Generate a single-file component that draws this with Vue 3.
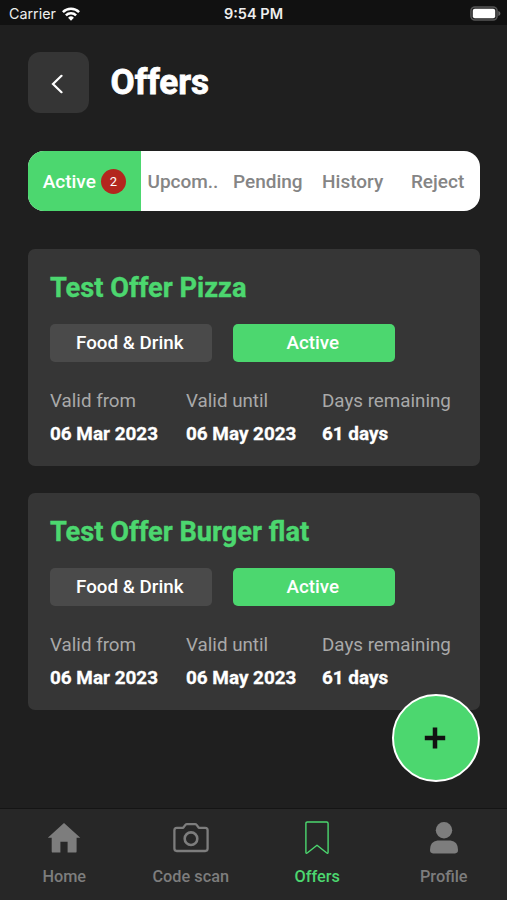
<script setup>
const tabs = [
  { label: 'Active', count: 2, active: true },
  { label: 'Upcom..' },
  { label: 'Pending' },
  { label: 'History' },
  { label: 'Reject' },
]
const offers = ['Test Offer Pizza', 'Test Offer Burger flat'].map((title) => ({
  title,
  category: 'Food & Drink',
  status: 'Active',
  details: [
    { label: 'Valid from', value: '06 Mar 2023' },
    { label: 'Valid until', value: '06 May 2023' },
    { label: 'Days remaining', value: '61 days' },
  ],
}))
</script>

<template>
  <div class="screen">
    <div class="status-bar">
      <div class="carrier">
        <span>Carrier</span>
        <svg width="18" height="14" viewBox="0 0 18 14" fill="none" stroke="#fff" stroke-width="2.5">
          <path d="M0.9 5.1a11.5 11.5 0 0 1 16.2 0" />
          <path d="M3.9 8.3a7.2 7.2 0 0 1 10.2 0" />
          <path d="M9 13.8 6.1 10.8a4.1 4.1 0 0 1 5.8 0z" fill="#fff" stroke="none" />
        </svg>
      </div>
      <span class="clock">9:54 PM</span>
      <svg class="battery" width="31" height="15" viewBox="0 0 31 15">
        <rect x="0.9" y="0.9" width="26.2" height="13.2" rx="4" fill="#222" stroke="#555" stroke-width="1.5" />
        <rect x="2.8" y="2.8" width="22.4" height="9.4" rx="2" fill="#fff" />
        <path d="M28.3 5c2.8.8 2.8 4.2 0 5z" fill="#666" />
      </svg>
    </div>

    <header class="header">
      <button class="back" aria-label="Back">
        <svg width="12" height="20" viewBox="0 0 12 20" fill="none" stroke="#fff" stroke-width="2.2" stroke-linecap="round">
          <path d="M10.5 1.8 2 10l8.5 8.2" />
        </svg>
      </button>
      <h1>Offers</h1>
    </header>

    <nav class="tabs">
      <div v-for="tab in tabs" :key="tab.label" class="tab" :class="{ active: tab.active }">
        <span>{{ tab.label }}</span>
        <span v-if="tab.count" class="count">{{ tab.count }}</span>
      </div>
    </nav>

    <main class="offers">
      <article v-for="offer in offers" :key="offer.title" class="card">
        <h2>{{ offer.title }}</h2>
        <div class="chips">
          <span class="chip">{{ offer.category }}</span>
          <span class="chip on">{{ offer.status }}</span>
        </div>
        <dl class="details">
          <div v-for="d in offer.details" :key="d.label">
            <dt>{{ d.label }}</dt>
            <dd>{{ d.value }}</dd>
          </div>
        </dl>
      </article>
    </main>

    <button class="fab" aria-label="Add offer">
      <svg width="22" height="22" viewBox="0 0 22 22" fill="none" stroke="#111" stroke-width="4.5">
        <path d="M11 .5v21M.8 11h20.4" />
      </svg>
    </button>

    <footer class="bottom-nav">
      <div class="nav-item">
        <svg width="36" height="36" viewBox="0 0 36 36" fill="currentColor">
          <path d="M18 2 34.3 16.7H30.6V30.4q0 1.2-1.2 1.2H21.6V20.7H14.4V31.6H6.9q-1.2 0-1.2-1.2V16.7H1.8z" />
        </svg>
        <span>Home</span>
      </div>
      <div class="nav-item">
        <svg width="36" height="36" viewBox="0 0 36 36" fill="none" stroke="currentColor" stroke-width="2.3" stroke-linejoin="round">
          <path d="M3.8 6.8H10.2L12.4 3.9Q13 3.1 14 3.1H22Q23 3.1 23.6 3.9L25.8 6.8H32.2Q34.6 6.8 34.6 9.2V27.6Q34.6 30 32.2 30H3.8Q1.4 30 1.4 27.6V9.2Q1.4 6.8 3.8 6.8z" />
          <circle cx="18" cy="17.7" r="6.3" stroke-width="2.6" />
        </svg>
        <span>Code scan</span>
      </div>
      <div class="nav-item active">
        <svg width="36" height="36" viewBox="0 0 36 36" fill="none" stroke="currentColor" stroke-width="1.4" stroke-linejoin="round">
          <path d="M8.3 1H27.7Q29.1 1 29.1 2.4V31.2Q29.1 33 27.5 31.8L18 24.2 8.5 31.8Q6.9 33 6.9 31.2V2.4Q6.9 1 8.3 1z" />
        </svg>
        <span>Offers</span>
      </div>
      <div class="nav-item">
        <svg width="36" height="36" viewBox="0 0 36 36" fill="currentColor">
          <circle cx="18" cy="9.2" r="8.2" />
          <path d="M11.5 19.6H24.5Q32 20.4 32 29.1 32 32.4 29 32.4H7Q4 32.4 4 29.1 4 20.4 11.5 19.6z" />
        </svg>
        <span>Profile</span>
      </div>
    </footer>
  </div>
</template>

<style>
body {
  margin: 0;
  background: #1f1f1f;
}
</style>

<style scoped>
.screen {
  position: relative;
  display: flex;
  flex-direction: column;
  box-sizing: border-box;
  width: 507px;
  height: 900px;
  overflow: hidden;
  background: #1f1f1f;
  color: #fff;
  font-family: Roboto, sans-serif;
}
.status-bar {
  display: grid;
  grid-template-columns: 1fr auto 1fr;
  align-items: center;
  box-sizing: border-box;
  height: 25px;
  padding: 2px 6px 0 9px;
  background: #111;
  color: #eee;
  font: 400 14.3px/20px Inter, sans-serif;
}
.carrier {
  display: flex;
  align-items: center;
  gap: 6px;
}
.clock {
  margin-right: 3px;
  font-weight: 600;
  font-size: 14.5px;
}
.battery {
  justify-self: end;
}
.header {
  display: flex;
  align-items: center;
  gap: 22px;
  height: 61px;
  padding: 27px 28px 0;
}
.back {
  display: flex;
  align-items: center;
  justify-content: center;
  width: 60.5px;
  height: 61px;
  padding: 2px 3px 0 0;
  box-sizing: border-box;
  border: 0;
  border-radius: 12px;
  background: #353535;
}
h1 {
  margin: 0;
  font-size: 35px;
  line-height: 60px;
  font-weight: 700;
  -webkit-text-stroke: 0.8px currentColor;
}
.tabs {
  display: flex;
  height: 60.5px;
  margin: 37.5px 27px 0 28px;
  overflow: hidden;
  border-radius: 16px;
  background: #fff;
}
.tab {
  display: flex;
  flex: 1 1 0;
  align-items: center;
  justify-content: center;
  padding-top: 1px;
  color: #858585;
  font-size: 19px;
  font-weight: 500;
}
.tab.active {
  flex: 0 0 112.5px;
  gap: 5px;
  background: #4cd76f;
  color: #fff;
}
.count {
  width: 25px;
  height: 25px;
  border-radius: 50%;
  background: #b3261e;
  font-size: 13px;
  font-weight: 400;
  line-height: 25px;
  text-align: center;
}
.offers {
  display: flex;
  flex-direction: column;
  gap: 27.5px;
  padding: 38px 27px 0 28px;
}
.card {
  box-sizing: border-box;
  height: 216.5px;
  padding: 21px 22px 0;
  border-radius: 7px;
  background: #363636;
}
h2 {
  margin: 0;
  color: #4cd76f;
  font-size: 27.2px;
  line-height: 36px;
  font-weight: 700;
  -webkit-text-stroke: 0.4px currentColor;
}
.chips {
  display: flex;
  gap: 21.5px;
  margin-top: 17.5px;
}
.chip {
  box-sizing: border-box;
  width: 161.5px;
  height: 38px;
  padding-right: 2px;
  border-radius: 5px;
  background: #4a4a4a;
  font-size: 18.8px;
  font-weight: 500;
  line-height: 38px;
  text-align: center;
}
.chip.on {
  background: #4cd76f;
}
.details {
  display: grid;
  grid-template-columns: repeat(3, 136px);
  margin: 23px 0 0;
  font-size: 18.8px;
  line-height: 33px;
  white-space: nowrap;
}
dt {
  color: #a9a9a9;
}
dd {
  margin: 0;
  font-size: 18.9px;
  line-height: 32px;
  font-weight: 700;
  -webkit-text-stroke: 0.3px currentColor;
}
.fab {
  position: absolute;
  right: 27px;
  bottom: 118.5px;
  display: flex;
  align-items: center;
  justify-content: center;
  width: 88px;
  height: 88px;
  padding: 0 2px 0 0;
  box-sizing: border-box;
  border: 2.5px solid #fff;
  border-radius: 50%;
  background: #4cd76f;
}
.bottom-nav {
  display: grid;
  grid-template-columns: repeat(4, 1fr);
  box-sizing: border-box;
  height: 92px;
  margin-top: auto;
  padding: 12px 0 0 1px;
  border-top: 1px solid #141414;
  background: #272727;
}
.nav-item {
  display: flex;
  flex-direction: column;
  align-items: center;
  gap: 9px;
  color: #7d7d7d;
  font-size: 16.3px;
  font-weight: 500;
  line-height: 22px;
}
.nav-item.active {
  color: #4cd76f;
}
</style>
